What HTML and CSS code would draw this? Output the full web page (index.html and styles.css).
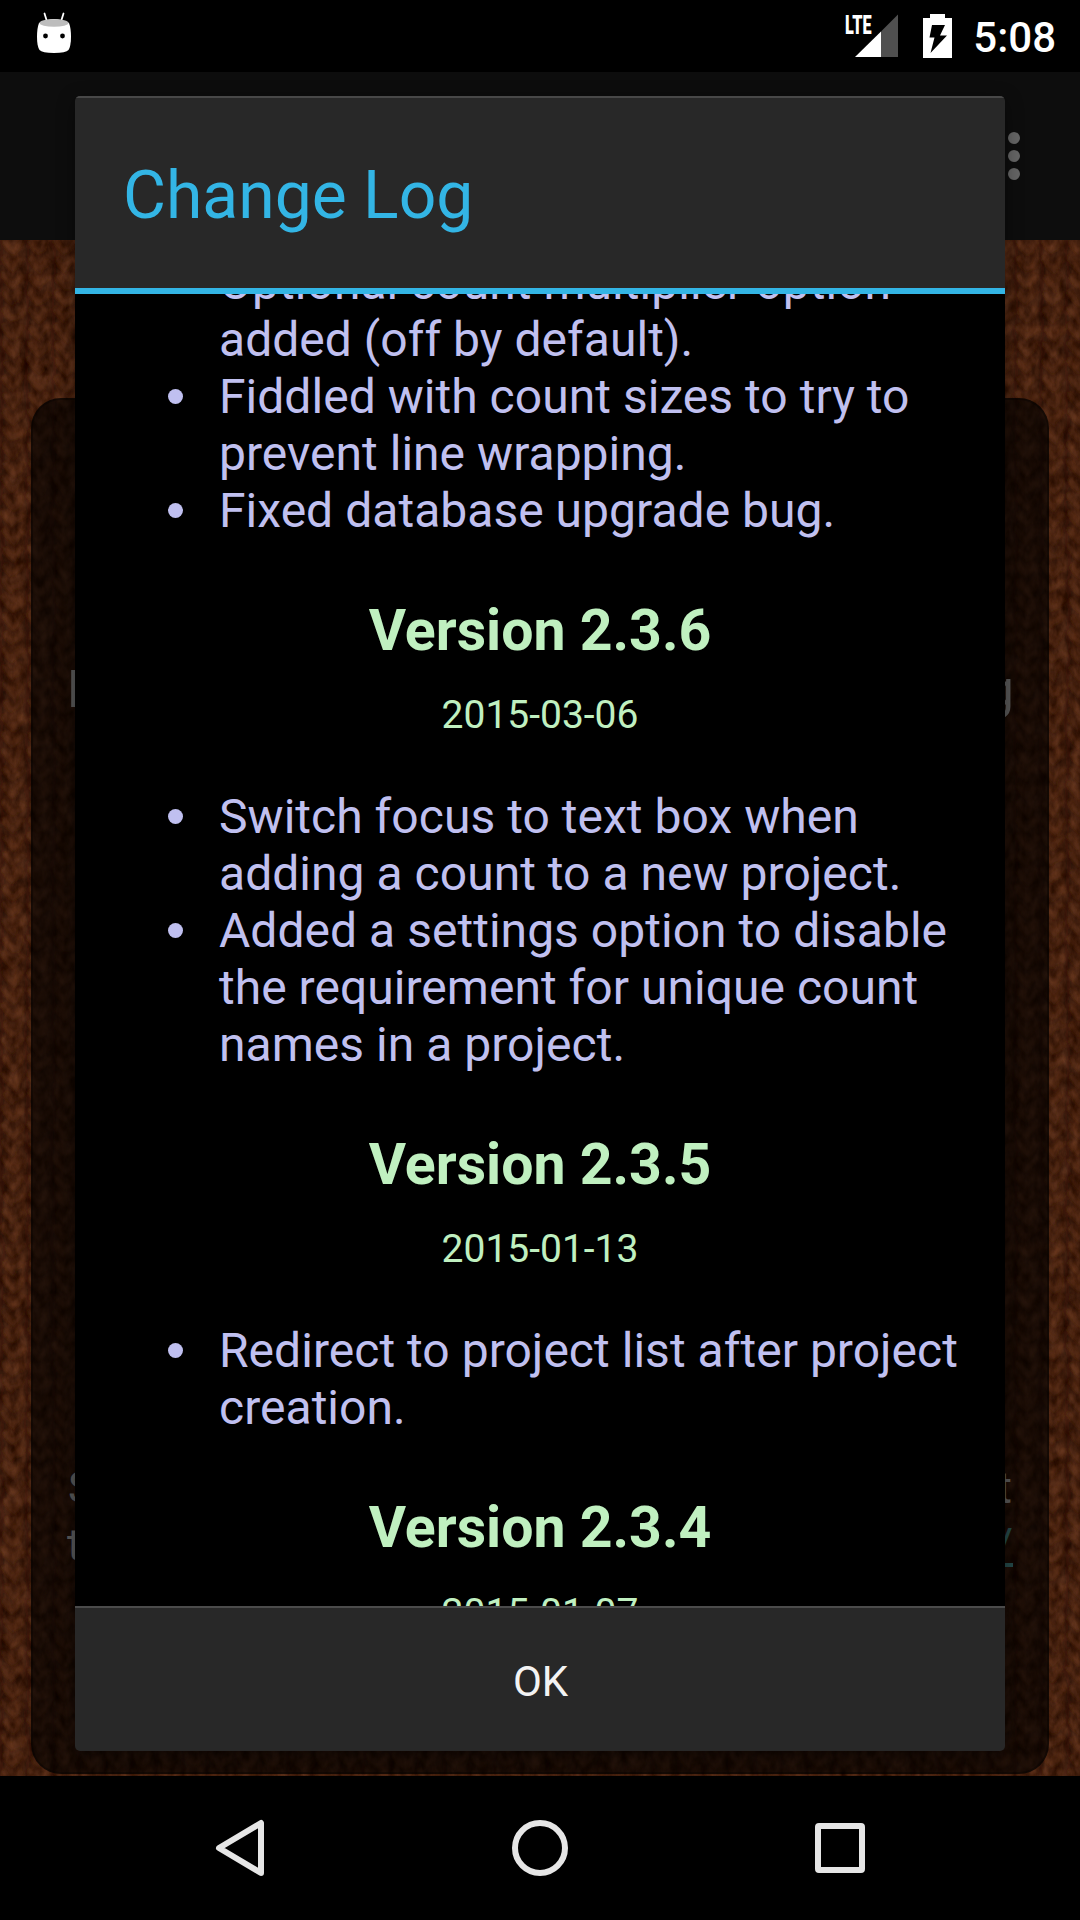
FILE: index.html
```html
<!DOCTYPE html>
<html lang="en">
<head>
<meta charset="utf-8">
<title>Change Log</title>
<link rel="stylesheet" href="styles.css">
</head>
<body>
<div class="phone">
  <header class="status">
    <svg class="droid" width="36" height="44" viewBox="36 11 36 44">
      <path d="M44.5 13.5l2.5 8M63.5 13.5l-2.5 8" stroke="#fff" stroke-width="1.8" stroke-linecap="round"/>
      <path d="M39 23q15-8 30 0q2 5 2 14t-2.500 13q-2.500 3-14.500 3t-14.500-3q-2.500-4-2.500-13t2-14z" fill="#fff"/>
      <ellipse cx="54" cy="23" rx="14.500" ry="3.800" fill="#bdbdbd"/>
      <circle cx="45.500" cy="36" r="2.400"/><circle cx="62.500" cy="36" r="2.400"/>
    </svg>
    <div class="status-right">
      <svg width="56" height="44" viewBox="844 14 56 44">
        <text class="lte" x="845" y="33.500" textLength="26.500" lengthAdjust="spacingAndGlyphs">LTE</text>
        <path d="M881 31.500L898 14.500V57H881z" fill="#505050"/>
        <path d="M855 57L881 31.500V57z" fill="#fff"/>
      </svg>
      <svg width="29" height="44" viewBox="923 14 29 44">
        <path d="M930 14h15v4h7v40h-29V18h7z" fill="#fff"/>
        <path d="M932 25h13l-5 10.500h7L930.500 53l4-15.500h-5z"/>
      </svg>
      <span class="clock">5:08</span>
    </div>
  </header>

  <div class="window">
    <div class="app">
      <div class="action-bar">
        <svg width="12" height="48" viewBox="0 0 12 48" fill="#656565"><circle cx="6" cy="6" r="6"/><circle cx="6" cy="24" r="6"/><circle cx="6" cy="42" r="6"/></svg>
      </div>
      <main class="wallpaper">
        <svg class="knit" width="1080" height="1536" preserveAspectRatio="none">
          <defs>
            <filter id="wool" x="0" y="0" width="100%" height="100%" color-interpolation-filters="sRGB">
              <feTurbulence type="fractalNoise" baseFrequency="0.1 0.06" numOctaves="4" seed="8"/>
              <feColorMatrix values="0.26 0.12 0 0 0.065  0.17 0.1 0 0 -0.018  0.12 0.09 0 0 -0.055  0 0 0 0 1"/>
            </filter>
            <filter id="fray" x="0" y="0" width="100%" height="100%">
              <feTurbulence type="fractalNoise" baseFrequency="0.05" numOctaves="2" seed="3"/>
              <feDisplacementMap in="SourceGraphic" scale="9"/>
              <feGaussianBlur stdDeviation="1.600"/>
            </filter>
            <pattern id="stitch" width="26" height="17" patternUnits="userSpaceOnUse">
              <path d="M1 0v17" stroke="#120300" stroke-opacity=".34" stroke-width="5"/>
              <path d="M4 1l9 12l9-12" fill="none" stroke="#9a5330" stroke-opacity=".18" stroke-width="4"/>
              <path d="M4 9l9 7l9-7" fill="none" stroke="#120300" stroke-opacity=".22" stroke-width="2"/>
            </pattern>
          </defs>
          <rect width="1080" height="1536" filter="url(#wool)"/>
          <rect width="1080" height="1536" fill="url(#stitch)" filter="url(#fray)"/>
        </svg>
        <section class="card">
          <p class="card-title"><span>K</span><span>g</span></p>
          <div class="card-note">
            <p><span class="indent">S</span><span>t</span></p>
            <p><span>t</span><span class="link">/</span></p>
          </div>
        </section>
      </main>
    </div>

    <section class="dialog" role="dialog">
      <h1>Change Log</h1>
      <div class="log">
        <ul class="first">
          <li>Optional count multiplier option added (off by default).</li>
          <li>Fiddled with count sizes to try to prevent line wrapping.</li>
          <li>Fixed database upgrade bug.</li>
        </ul>
        <h2>Version 2.3.6</h2>
        <p class="date">2015-03-06</p>
        <ul>
          <li>Switch focus to text box when adding a count to a new project.</li>
          <li>Added a settings option to disable the requirement for unique count names in a project.</li>
        </ul>
        <h2>Version 2.3.5</h2>
        <p class="date">2015-01-13</p>
        <ul>
          <li>Redirect to project list after project creation.</li>
        </ul>
        <h2>Version 2.3.4</h2>
        <p class="date">2015-01-07</p>
      </div>
      <button class="ok">OK</button>
    </section>
  </div>

  <nav class="nav">
    <svg width="60" height="60" viewBox="-30 -30 60 60"><path d="M21-25V25L-21 0z"/></svg>
    <svg width="60" height="60" viewBox="-30 -30 60 60"><circle r="25"/></svg>
    <svg width="60" height="60" viewBox="-30 -30 60 60"><rect x="-22" y="-22" width="44" height="44" rx="1"/></svg>
  </nav>
</div>
</body>
</html>
```
FILE: styles.css
```css
* { box-sizing: border-box; }
body {
  margin: 0;
  background: #000;
  color: #fff;
  font-family: Roboto, sans-serif;
}
p, h1, h2, ul { margin: 0; }
.phone {
  width: 1080px;
  height: 1920px;
  display: flex;
  flex-direction: column;
  overflow: hidden;
}

/* Status bar */
.status {
  height: 72px;
  padding: 11px 24px 0 36px;
  display: flex;
  justify-content: space-between;
}
.status-right { display: flex; padding-top: 3px; }
.status-right svg { overflow: visible; }
.status-right svg:first-child { margin-right: 23px; }
.lte {
  font: 900 26px Roboto, sans-serif;
  fill: #fff;
}
.clock {
  margin-left: 21px;
  font-size: 42px;
  font-weight: 500;
  line-height: 48px;
}

/* App behind the dialog */
.window {
  height: 1704px;
  display: grid;
  overflow: hidden;
}
.window > * { grid-area: 1 / 1; }
.action-bar {
  height: 168px;
  padding: 60px 60px 0 0;
  display: flex;
  justify-content: flex-end;
  background: #0d0d0d;
}
.wallpaper {
  height: 1536px;
  display: grid;
  background: #3d190a;
}
.wallpaper > * { grid-area: 1 / 1; }
.card {
  z-index: 1;
  margin: 158px 31px 2px;
  padding: 0 34px;
  border: 2px solid rgba(0, 0, 0, .3);
  border-radius: 30px;
  background: rgba(0, 0, 0, .64);
  color: #585858;
  font-size: 45px;
}
.card p { display: flex; justify-content: space-between; }
.card-title {
  padding: 257px 0 0;
  font-size: 51px;
  line-height: 66px;
}
.card-title span:last-child { margin-right: -1px; }
.card-note { padding-top: 736px; line-height: 57px; }
.card-note .indent { padding-left: 1px; }
.card-note p:first-child { padding-right: 1px; }
.link { color: #244848; text-decoration: underline; }

/* Dialog */
.dialog {
  z-index: 1;
  width: 930px;
  height: 1655px;
  margin: 24px 0 0 75px;
  display: flex;
  flex-direction: column;
  overflow: hidden;
  border-radius: 5px;
  background: #282828;
  box-shadow: 0 4px 18px rgba(0, 0, 0, .4);
}
.dialog h1 {
  height: 198px;
  padding: 5px 48px 0;
  border-top: 2px solid #484848;
  border-bottom: 6px solid #33b5e5;
  color: #33b5e5;
  font-size: 66px;
  font-weight: 400;
  line-height: 186px;
}
.log {
  height: 1312px;
  padding: 0 24px;
  overflow: hidden;
  background: #000;
  color: #c0c0f0;
  font-size: 48px;
  line-height: 57px;
}
.log ul {
  padding: 0 0 0 120px;
  list-style: none;
  letter-spacing: .03px;
}
.log li { position: relative; }
.log li::before {
  content: "";
  position: absolute;
  top: 21px;
  left: -51px;
  width: 15px;
  height: 15px;
  border-radius: 50%;
  background: #c0c0f0;
}
.log .first { margin-top: -40px; }
.log h2 {
  margin-top: 58.9px;
  color: #c0f0c0;
  font-size: 57.2px;
  font-weight: 700;
  line-height: 66px;
  text-align: center;
}
.date {
  margin: 27.5px 0 48.7px;
  color: #c0f0c0;
  font-size: 39px;
  line-height: 48px;
  text-align: center;
}
.ok {
  height: 145px;
  padding: 4px 0 0 1px;
  border: 0;
  border-top: 2px solid #4b4b4b;
  background: none;
  color: #f3f3f3;
  font: 42px Roboto, sans-serif;
}

/* Navigation bar */
.nav {
  height: 144px;
  padding: 0 210px;
  display: flex;
  align-items: center;
  justify-content: space-between;
}
.nav svg {
  fill: none;
  stroke: #e6e6e6;
  stroke-width: 6;
  stroke-linejoin: round;
}
```
